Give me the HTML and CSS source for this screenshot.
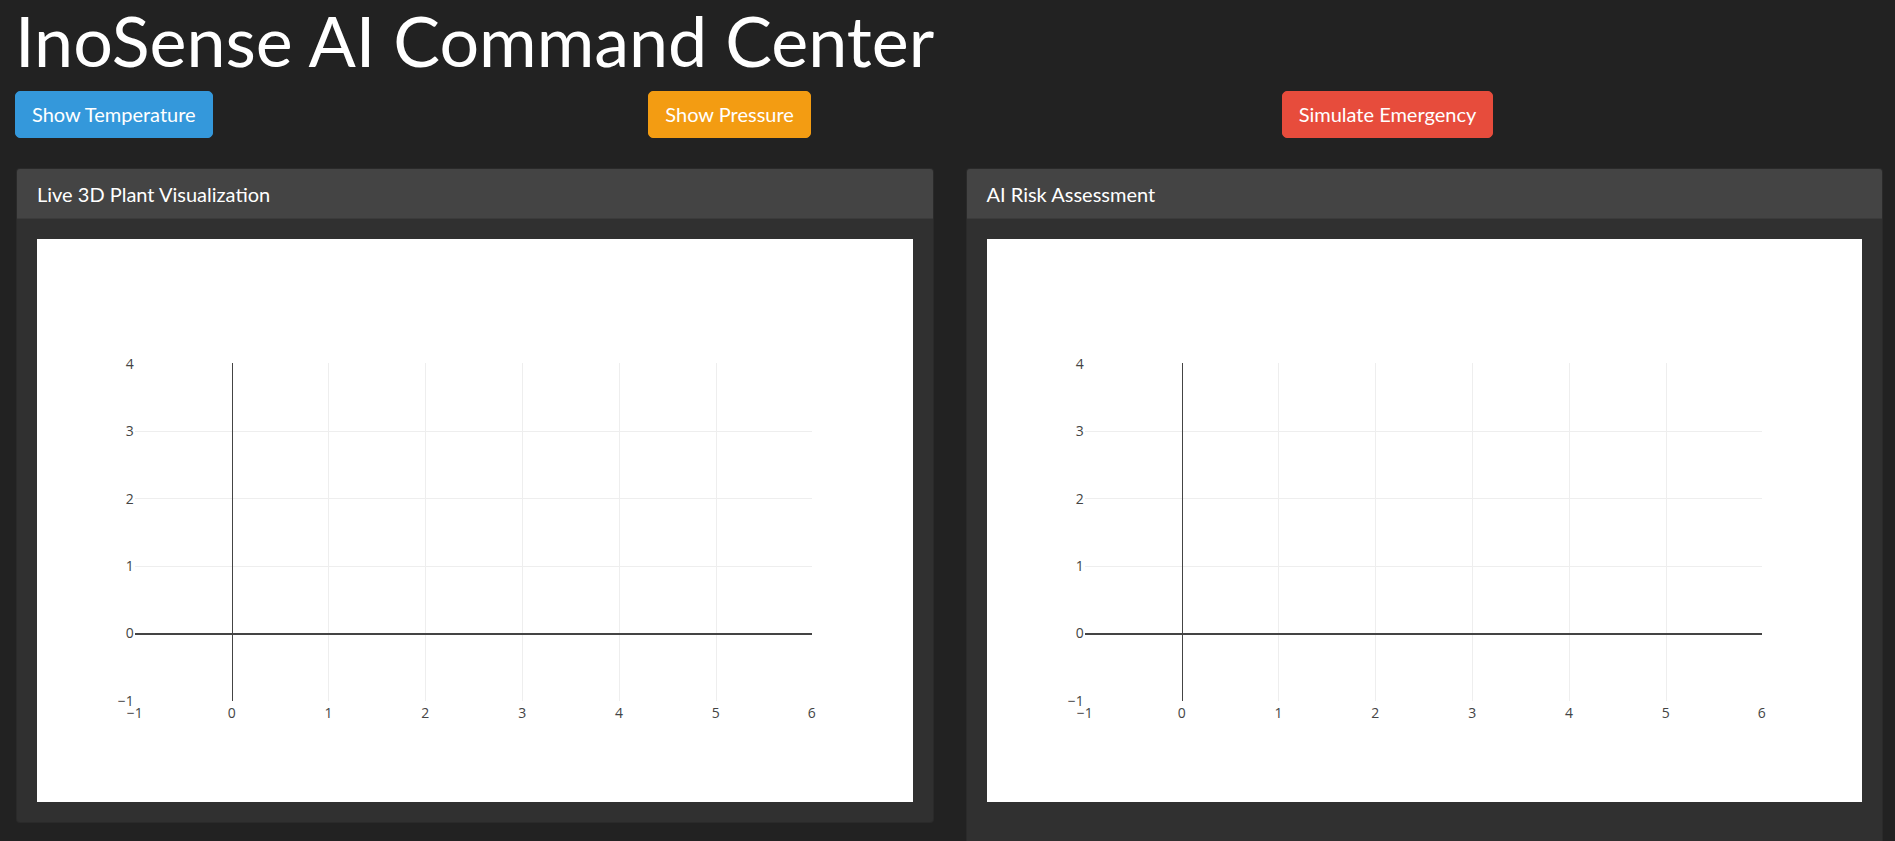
FILE: index.html
```html
<!DOCTYPE html>
<html lang="en">
<head>
<meta charset="utf-8">
<title>InoSense AI Command Center</title>
<link rel="stylesheet" href="styles.css">
</head>
<body>
<div class="page">
  <h1 class="title">InoSense AI Command Center</h1>
  <div class="controls">
    <div class="control-cell"><button class="btn btn-info">Show Temperature</button></div>
    <div class="control-cell"><button class="btn btn-warning">Show Pressure</button></div>
    <div class="control-cell"><button class="btn btn-danger">Simulate Emergency</button></div>
  </div>
  <div class="panels">
    <div class="card">
      <div class="card-header">Live 3D Plant Visualization</div>
      <div class="card-body">
        <div class="plot">
          <svg class="plot-svg" viewBox="0 0 877 563" width="877" height="563">
            <g class="grid">
              <line x1="292.5" y1="124" x2="292.5" y2="462"/>
              <line x1="389.5" y1="124" x2="389.5" y2="462"/>
              <line x1="486.5" y1="124" x2="486.5" y2="462"/>
              <line x1="583.5" y1="124" x2="583.5" y2="462"/>
              <line x1="680.5" y1="124" x2="680.5" y2="462"/>
              <line x1="98" y1="192.5" x2="776" y2="192.5"/>
              <line x1="98" y1="259.5" x2="776" y2="259.5"/>
              <line x1="98" y1="327.5" x2="776" y2="327.5"/>
            </g>
            <line class="zero-v" x1="195.5" y1="124" x2="195.5" y2="462"/>
            <line class="zero-h" x1="98" y1="395" x2="776" y2="395"/>
            <g class="ytick">
              <text x="97" y="129.5">4</text>
              <text x="97" y="197">3</text>
              <text x="97" y="264.5">2</text>
              <text x="97" y="332">1</text>
              <text x="97" y="399.5">0</text>
              <text x="97" y="467.5">−1</text>
            </g>
            <g class="xtick">
              <text x="98" y="479">−1</text>
              <text x="195" y="479">0</text>
              <text x="292" y="479">1</text>
              <text x="389" y="479">2</text>
              <text x="486" y="479">3</text>
              <text x="583" y="479">4</text>
              <text x="680" y="479">5</text>
              <text x="776" y="479">6</text>
            </g>
          </svg>
        </div>
      </div>
    </div>
    <div class="card">
      <div class="card-header">AI Risk Assessment</div>
      <div class="card-body">
        <div class="plot">
          <svg class="plot-svg" viewBox="0 0 877 563" width="877" height="563">
            <g class="grid">
              <line x1="292.5" y1="124" x2="292.5" y2="462"/>
              <line x1="389.5" y1="124" x2="389.5" y2="462"/>
              <line x1="486.5" y1="124" x2="486.5" y2="462"/>
              <line x1="583.5" y1="124" x2="583.5" y2="462"/>
              <line x1="680.5" y1="124" x2="680.5" y2="462"/>
              <line x1="98" y1="192.5" x2="776" y2="192.5"/>
              <line x1="98" y1="259.5" x2="776" y2="259.5"/>
              <line x1="98" y1="327.5" x2="776" y2="327.5"/>
            </g>
            <line class="zero-v" x1="195.5" y1="124" x2="195.5" y2="462"/>
            <line class="zero-h" x1="98" y1="395" x2="776" y2="395"/>
            <g class="ytick">
              <text x="97" y="129.5">4</text>
              <text x="97" y="197">3</text>
              <text x="97" y="264.5">2</text>
              <text x="97" y="332">1</text>
              <text x="97" y="399.5">0</text>
              <text x="97" y="467.5">−1</text>
            </g>
            <g class="xtick">
              <text x="98" y="479">−1</text>
              <text x="195" y="479">0</text>
              <text x="292" y="479">1</text>
              <text x="389" y="479">2</text>
              <text x="486" y="479">3</text>
              <text x="583" y="479">4</text>
              <text x="680" y="479">5</text>
              <text x="776" y="479">6</text>
            </g>
          </svg>
        </div>
        <div class="risk-output"></div>
      </div>
    </div>
  </div>
</div>
</body>
</html>
```

FILE: styles.css
```css
html, body {
  margin: 0;
  padding: 0;
  background: #222222;
  color: #ffffff;
  font-family: Lato, "Liberation Sans", sans-serif;
  font-size: 15px;
}

.page {
  padding: 0 12px 0 15px;
}

.title {
  margin: -2px 0 0 0;
  font-size: 70px;
  font-weight: 400;
  line-height: 1.2;
  color: #ffffff;
}

.controls {
  display: grid;
  grid-template-columns: repeat(3, 1fr);
  column-gap: 32px;
  margin-top: 9px;
}

.control-cell {
  display: flex;
  align-items: flex-start;
}

.btn {
  font-family: Lato, "Liberation Sans", sans-serif;
  font-size: 20px;
  line-height: 29px;
  padding: 8px 16px;
  border: 1px solid transparent;
  border-radius: 5px;
  color: #ffffff;
  cursor: pointer;
}

.btn-info { background: #3498db; border-color: #3498db; }
.btn-warning { background: #f39c12; border-color: #f39c12; }
.btn-danger { background: #e74c3c; border-color: #e74c3c; }

.panels {
  display: grid;
  grid-template-columns: 1fr 1fr;
  column-gap: 32px;
  align-items: start;
  margin-top: 30px;
  padding-left: 1px;
}

.card {
  background: #303030;
  border: 1px solid rgba(0, 0, 0, 0.125);
  border-radius: 4px;
  overflow: hidden;
}

.card-header {
  background: #444444;
  height: 49px;
  padding: 0 20px;
  font-size: 20px;
  line-height: 50px;
  border-bottom: 1px solid rgba(0, 0, 0, 0.125);
  color: #ffffff;
}

.card-body {
  padding: 20px;
}

.plot {
  background: #ffffff;
  height: 563px;
  overflow: hidden;
}

.plot-svg {
  display: block;
  width: 100%;
  height: 563px;
}

.grid line {
  stroke: #eeeeee;
  stroke-width: 1;
  shape-rendering: crispEdges;
}

.zero-v {
  stroke: #444444;
  stroke-width: 1;
  shape-rendering: crispEdges;
}

.zero-h {
  stroke: #444444;
  stroke-width: 2;
  shape-rendering: crispEdges;
}

.ytick text,
.xtick text {
  font-family: "Open Sans", verdana, arial, sans-serif;
  font-size: 14px;
  fill: #444444;
}

.ytick text { text-anchor: end; }
.xtick text { text-anchor: middle; }

.risk-output {
  height: 60px;
}
```
